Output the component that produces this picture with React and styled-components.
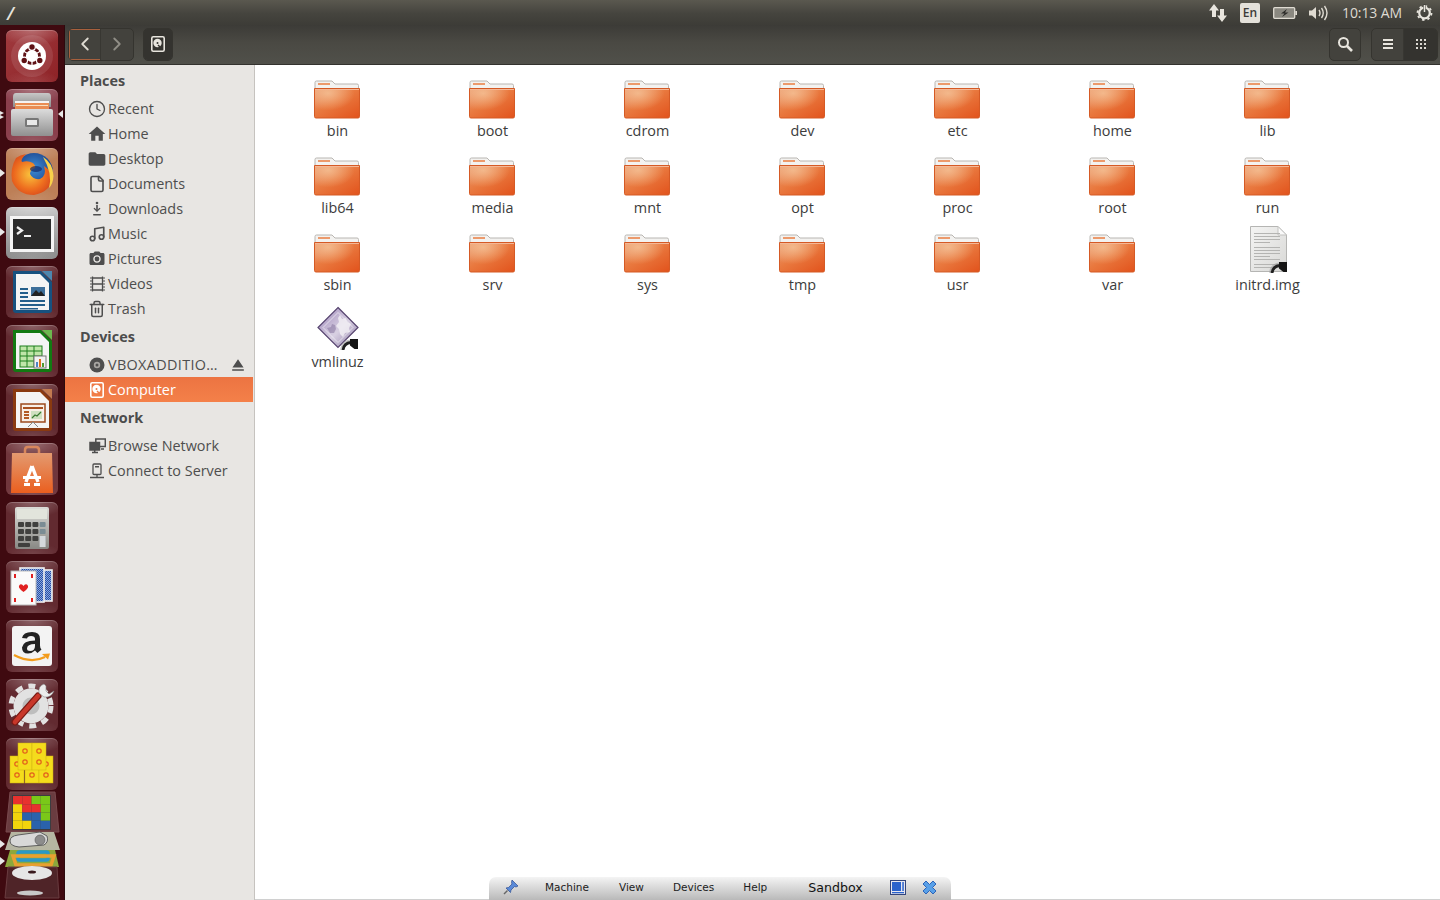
import React from "react";
import styled, { createGlobalStyle } from "styled-components";
import { LuFile, LuMusic, LuTrash2, LuChevronLeft, LuChevronRight } from "react-icons/lu";
import { MdHome, MdFolder, MdCameraAlt, MdEject } from "react-icons/md";
import { FiClock } from "react-icons/fi";

const GlobalStyle = createGlobalStyle`
  html, body { margin: 0; padding: 0; height: 100%; overflow: hidden; background: #fff; }
  * { box-sizing: border-box; }
  body { font-family: "Open Sans", "Noto Sans", sans-serif; }
`;

const Page = styled.div`
  position: relative;
  width: 1440px;
  height: 900px;
  display: flex;
  flex-direction: column;
  overflow: hidden;
`;

const TopBar = styled.header`
  height: 25px;
  flex: none;
  display: flex;
  align-items: center;
  justify-content: space-between;
  padding: 0 7px;
  background: linear-gradient(#5a584f 0%, #45443e 55%, #3d3c37 100%);
  color: #dfdbd2;
`;

const WindowName = styled.span`
  font-size: 18px;
  font-style: italic;
  font-weight: 600;
  color: #e6e3dc;
`;

const Indicators = styled.div`
  display: flex;
  align-items: center;
`;

const Indicator = styled.span`
  display: flex;
  align-items: center;
  margin-left: ${(p) => p.$gap || 0}px;
`;

const LangBadge = styled.span`
  width: 20px;
  height: 20px;
  border-radius: 2px;
  background: #e4e1da;
  color: #3c3b37;
  font-size: 12px;
  font-weight: 600;
  display: flex;
  align-items: center;
  justify-content: center;
`;

const Clock = styled.span`
  font-size: 14px;
  color: #dfdbd2;
  letter-spacing: -0.1px;
`;

const Body = styled.div`
  flex: 1;
  display: flex;
  min-height: 0;
`;

const Launcher = styled.nav`
  position: relative;
  width: 65px;
  flex: none;
  background: #3f0a10;
  border-right: 1px solid #2c0a0e;
  padding: 5px 0 0 6px;
  display: flex;
  flex-direction: column;
  gap: 7px;
  overflow: hidden;
`;

const Tile = styled.div`
  position: relative;
  width: 52px;
  height: 52px;
  flex: none;
  border-radius: 6px;
  background: ${(p) => p.$bg || "#6b2a30"};
  box-shadow: inset 0 1px 0 rgba(255, 255, 255, 0.22);
  &::before {
    content: "";
    position: absolute;
    inset: 0;
    border-radius: 6px;
    background: radial-gradient(ellipse 34px 16px at 50% 0, rgba(255, 255, 255, 0.28), transparent),
      radial-gradient(ellipse 30px 12px at 50% 100%, rgba(255, 255, 255, 0.12), transparent);
  }
  svg {
    position: relative;
    display: block;
  }
`;

const Pip = styled.i`
  position: absolute;
  width: 0;
  height: 0;
  top: ${(p) => p.$y}px;
  border-top: ${(p) => (p.$small ? 2 : 4)}px solid transparent;
  border-bottom: ${(p) => (p.$small ? 2 : 4)}px solid transparent;
  ${(p) =>
    p.$right
      ? "right: 1px; border-right: 5px solid #e8e8e8;"
      : `left: 0; border-left: ${p.$small ? 4 : 5}px solid #e8e8e8;`}
`;

const Stack = styled.div`
  margin: -6px 0 0 -2px;
  flex: none;
`;

const Window = styled.main`
  flex: 1;
  display: flex;
  flex-direction: column;
  min-width: 0;
`;

const Toolbar = styled.div`
  height: 40px;
  flex: none;
  display: flex;
  align-items: center;
  padding: 0 2px 1px 3px;
  background: linear-gradient(#3c3b37 0%, #4a4943 45%, #50504a 100%);
  border-bottom: 1px solid #33322e;
`;

const BtnGroup = styled.div`
  display: flex;
  height: 33px;
  margin-left: ${(p) => p.$gap || 0}px;
  border: 1px solid #35342f;
  border-radius: 5px;
  background: #43423d;
  overflow: hidden;
`;

const ToolBtn = styled.button`
  width: ${(p) => p.$w}px;
  height: 100%;
  padding: 0;
  border: none;
  display: flex;
  align-items: center;
  justify-content: center;
  color: ${(p) => (p.$dim ? "#908e86" : "#dfdbd2")};
  background: ${(p) => (p.$pressed ? "#34332f" : "transparent")};
  border-right: ${(p) => (p.$divider ? "1px solid #383732" : "none")};
  box-shadow: ${(p) => (p.$focus ? "inset 1px 1px 0 #a8603d, inset 0 -1px 0 #a8603d" : "none")};
`;

const Spacer = styled.div`
  flex: 1;
`;

const Main = styled.div`
  flex: 1;
  display: flex;
  min-height: 0;
`;

const Sidebar = styled.aside`
  width: 190px;
  flex: none;
  background: #e8e6e3;
  border-right: 1px solid #c6c3bf;
  color: #4e4e4e;
`;

const Heading = styled.h3`
  margin: 0;
  height: 31px;
  line-height: 31px;
  padding-left: 15px;
  font-size: 14.4px;
  font-weight: 700;
  color: #4c4c4c;
`;

const Row = styled.div`
  height: 25px;
  width: 188px;
  display: flex;
  align-items: center;
  gap: 3px;
  padding-left: 24px;
  font-size: 14.4px;
  color: ${(p) => (p.$active ? "#fff" : "#4e4e4e")};
  background: ${(p) => (p.$active ? "linear-gradient(#ec7442, #f48049)" : "transparent")};
`;

const RowIcon = styled.span`
  width: 16px;
  height: 16px;
  flex: none;
  display: flex;
  align-items: center;
  justify-content: center;
  svg { flex: none; }
`;

const RowText = styled.span`
  flex: 1;
  min-width: 0;
  white-space: nowrap;
  letter-spacing: ${(p) => (p.$wide ? "0.35px" : "0")};
`;

const Eject = styled.span`
  display: flex;
  margin-right: 5px;
  color: #4e4e4e;
`;

const Content = styled.section`
  flex: 1;
  background: #fff;
  padding-left: 5px;
  display: grid;
  grid-template-columns: repeat(7, 155px);
  grid-auto-rows: 77px;
  align-content: start;
`;

const Item = styled.div`
  display: flex;
  flex-direction: column;
  align-items: center;
`;

const ItemIcon = styled.div`
  height: 54px;
  display: flex;
  align-items: flex-end;
  justify-content: center;
  svg { display: block; }
`;

const ItemLabel = styled.div`
  height: 22px;
  line-height: 24px;
  font-size: 14.4px;
  color: #3c3c3c;
`;

const VBoxBar = styled.div`
  position: absolute;
  left: 489px;
  bottom: 0;
  width: 462px;
  height: 23px;
  padding-bottom: 3px;
  display: flex;
  align-items: center;
  border-radius: 7px 7px 0 0;
  background: linear-gradient(#f4f4f4, #b9b9b9);
  font-family: "DejaVu Sans", sans-serif;
  font-size: 10.5px;
  color: #1c1c1c;
`;

const BottomLine = styled.div`
  position: absolute;
  left: 255px;
  right: 0;
  bottom: 0;
  height: 1px;
  background: #d0d0d0;
`;

const VBoxItem = styled.span`
  margin-left: ${(p) => p.$gap}px;
  display: flex;
  align-items: center;
  white-space: nowrap;
`;

const VBoxTitle = styled.span`
  margin-left: 41px;
  font-family: "DejaVu Sans", sans-serif;
  font-size: 12.6px;
  color: #111;
`;

/* ---------- content icons ---------- */

const Folder = () => (
  <svg width="48" height="39" viewBox="1 0 48 39">
    <defs>
      <linearGradient id="folderBody" x1="0.05" y1="0" x2="0.95" y2="1">
        <stop offset="0" stopColor="#eb9b70" />
        <stop offset="0.45" stopColor="#e9793f" />
        <stop offset="1" stopColor="#e2541d" />
      </linearGradient>
      <radialGradient id="folderGlow" cx="0.3" cy="0.15" r="0.6">
        <stop offset="0" stopColor="#f6c79c" stopOpacity="0.75" />
        <stop offset="1" stopColor="#f6c79c" stopOpacity="0" />
      </radialGradient>
    </defs>
    <path d="M2 11V2.500Q2 1 3.500 1H19l3 3h22q1.500 0 1.500 1.500V11z" fill="#f3f2f0" stroke="#b9b6b2" />
    <rect x="5" y="3" width="12" height="2" fill="#ec9a6c" />
    <path d="M1.500 8.500H46.500V36.500Q46.500 38 45 38H3Q1.500 38 1.500 36.500z" fill="url(#folderBody)" stroke="#d55a25" />
    <path d="M2 9H46V37.500H2z" fill="url(#folderGlow)" />
    <path d="M2 9h44v1H2z" fill="#f4b795" />
  </svg>
);

const LinkArrow = ({ x, y }) => (
  <g transform={`translate(${x} ${y})`}>
    <path d="M-2 11Q-1 3 7 2.500" fill="none" stroke="#999" strokeWidth="4" opacity="0.55" />
    <path d="M-1 11Q0 4 7 3.500" fill="none" stroke="#1f1f1f" strokeWidth="2.800" />
    <path d="M6 0H14V10H10.500L6 6.500z" fill="#141414" />
  </g>
);

const TextFile = () => (
  <svg width="48" height="47" viewBox="0 0 48 47">
    <defs>
      <linearGradient id="pageFill" x1="0" y1="0" x2="1" y2="1">
        <stop offset="0" stopColor="#f4f4f3" />
        <stop offset="1" stopColor="#d8d8d6" />
      </linearGradient>
    </defs>
    <path d="M6.500 .5H34L42.500 9V45.500H6.500z" fill="url(#pageFill)" stroke="#b5b5b3" />
    <path d="M34 .5V9H42.500z" fill="#fafafa" stroke="#c2c2c0" />
    {[7, 10, 13, 16, 21, 24, 27, 30, 33, 38, 41].map((y, i) => (
      <rect key={y} x="10" y={y} width={i % 4 === 3 ? 16 : 26} height="1" fill="#b4b4b2" />
    ))}
    <LinkArrow x={29} y={36} />
  </svg>
);

const Kernel = () => (
  <svg width="48" height="44" viewBox="0 0 48 44">
    <defs>
      <linearGradient id="kernelFill" x1="0" y1="0" x2="1" y2="1">
        <stop offset="0" stopColor="#9b84b8" />
        <stop offset="0.55" stopColor="#d8d0e2" />
        <stop offset="1" stopColor="#8a78a4" />
      </linearGradient>
    </defs>
    <path d="M24 1.500L44 21.500 24 41.500 4 21.500z" fill="url(#kernelFill)" stroke="#56446f" strokeWidth="1.200" />
    <path d="M9 21.500L24 6.500 39 21.500 24 36.500z" fill="none" stroke="#fff" strokeWidth="0.800" opacity="0.7" />
    <path d="M26 9l2 4 4-1 1 4 4 2-2 4 1 4-5 1-2 4-3-3-1-5-3-3 3-4-1-4z" fill="#f2f0f5" opacity="0.8" />
    <path d="M13 22l4-1 1-3 3 1 1 4-2 4-4 0z" fill="#6e5b8a" opacity="0.4" />
    <LinkArrow x={30} y={33} />
  </svg>
);

/* ---------- sidebar icons ---------- */

const DownloadIcon = () => (
  <svg width="16" height="16" viewBox="0 0 16 16" fill="#4e4e4e">
    <circle cx="8" cy="2" r="1.300" />
    <rect x="7.200" y="4" width="1.600" height="6" />
    <path d="M4.500 7.500L8 11l3.500-3.500-1-.8L8 9.200 5.500 6.700z" />
    <rect x="4" y="13" width="8" height="1.500" rx=".7" />
  </svg>
);

const FilmIcon = () => (
  <svg width="17" height="16" viewBox="0 0 17 16" fill="none" stroke="#4e4e4e" strokeWidth="1.300">
    <path d="M3.500 .5V15.500M13.500 .5V15.500M3.500 2H13.500M3.500 8H13.500M3.500 14H13.500" />
    <path d="M1 2H3M1 5H3M1 8H3M1 11H3M1 14H3M14 2H16M14 5H16M14 8H16M14 11H16M14 14H16" strokeWidth="1.200" />
  </svg>
);

const DiscIcon = () => (
  <svg width="16" height="16" viewBox="0 0 16 16">
    <circle cx="8" cy="8" r="7.500" fill="#4e4e4e" />
    <circle cx="8" cy="8" r="3.200" fill="#a8a6a3" />
    <circle cx="8" cy="8" r="1.500" fill="#4e4e4e" />
  </svg>
);

const DriveIcon = ({ fg = "#fff", hub = "#ef7a47" }) => (
  <svg width="14" height="16" viewBox="0 0 14 16">
    <rect x=".8" y=".8" width="12.400" height="14.400" rx="1.500" fill="none" stroke={fg} strokeWidth="1.600" />
    <circle cx="6.500" cy="7" r="4.200" fill={fg} />
    <circle cx="6.500" cy="7" r="1" fill={hub} />
    <path d="M7 9l4 4" stroke={hub} strokeWidth="1.400" />
  </svg>
);

const NetworkIcon = () => (
  <svg width="17" height="16" viewBox="0 0 17 16" fill="none" stroke="#4e4e4e" strokeWidth="1.500">
    <rect x="6.800" y="1" width="9.500" height="7.500" />
    <rect x="1" y="4.500" width="9.500" height="7.500" fill="#4e4e4e" />
    <path d="M3 14.500h6M5.700 12v2.500" />
    <path d="M12 11h3" />
  </svg>
);

const ServerIcon = () => (
  <svg width="16" height="16" viewBox="0 0 16 16" fill="none" stroke="#4e4e4e" strokeWidth="1.300">
    <rect x="4" y="1" width="8" height="10.500" rx="1" />
    <rect x="6" y="3" width="4" height="1.500" fill="#4e4e4e" stroke="none" />
    <path d="M8 11.500V14M1 14.500h14" />
  </svg>
);

/* ---------- launcher icons ---------- */

const UbuntuLogo = () => (
  <svg width="52" height="52" viewBox="0 0 52 52">
    <circle cx="26" cy="26" r="21" fill="#fff" opacity="0.1" />
    <circle cx="26" cy="26" r="14" fill="#fff" />
    <circle cx="26" cy="26" r="7.500" fill="none" stroke="#5e1014" strokeWidth="2.800" />
    <g stroke="#fff" strokeWidth="1.300">
      <path d="M26 26V36M26 26L17.300 21M26 26L34.700 21" />
    </g>
    <circle cx="26" cy="17" r="3.300" fill="#5e1014" stroke="#fff" strokeWidth="1.200" />
    <circle cx="18.200" cy="30.500" r="3.300" fill="#5e1014" stroke="#fff" strokeWidth="1.200" />
    <circle cx="33.800" cy="30.500" r="3.300" fill="#5e1014" stroke="#fff" strokeWidth="1.200" />
  </svg>
);

const FilesIcon = () => (
  <svg width="52" height="52" viewBox="0 0 52 52">
    <defs>
      <linearGradient id="cab" x1="0" y1="0" x2="0" y2="1">
        <stop offset="0" stopColor="#dcdcdc" />
        <stop offset="1" stopColor="#909090" />
      </linearGradient>
      <linearGradient id="cabTop" x1="0" y1="0" x2="0" y2="1">
        <stop offset="0" stopColor="#c8c8c8" />
        <stop offset="1" stopColor="#8c8c8c" />
      </linearGradient>
    </defs>
    <path d="M7 8q0-4 3-4h32q3 0 3 4v10H7z" fill="url(#cabTop)" />
    <rect x="9" y="12" width="34" height="8" fill="#f4f4f4" />
    <rect x="9" y="14" width="34" height="6" fill="#e98d54" />
    <rect x="10" y="16" width="32" height="1" fill="#f9e0c0" />
    <rect x="5" y="20" width="42" height="27" rx="2" fill="url(#cab)" />
    <rect x="19" y="29" width="14" height="9" rx="1.500" fill="#777" />
    <rect x="21" y="31" width="10" height="5" fill="#e8e8e8" />
  </svg>
);

const FirefoxIcon = () => (
  <svg width="52" height="52" viewBox="0 0 52 52">
    <defs>
      <radialGradient id="ffOrange" cx="0.45" cy="0.5" r="0.6">
        <stop offset="0" stopColor="#f9c23c" />
        <stop offset="0.6" stopColor="#ee6e1f" />
        <stop offset="1" stopColor="#d5441b" />
      </radialGradient>
      <radialGradient id="ffBlue" cx="0.5" cy="0.4" r="0.6">
        <stop offset="0" stopColor="#3c8fd8" />
        <stop offset="1" stopColor="#19367e" />
      </radialGradient>
    </defs>
    <circle cx="28" cy="24" r="19" fill="url(#ffBlue)" />
    <path d="M10 10Q14 7 20 6 14 12 16 14 22 12 27 15 30 18 29 20 24 22 24 26 27 32 34 31 41 28 38 18 47 24 47 30 44 44 28 47 12 47 6 33 4 20 10 10z" fill="url(#ffOrange)" />
    <path d="M37 9Q47 15 47.500 28 47 36 43 40 47 26 37 9z" fill="#f8d14a" />
    <ellipse cx="30" cy="21" rx="6" ry="3" fill="#14296a" opacity="0.7" />
  </svg>
);

const TerminalIcon = () => (
  <svg width="52" height="52" viewBox="0 0 52 52">
    <rect x="4" y="9" width="44" height="36" fill="#f5f5f5" />
    <rect x="7" y="12" width="38" height="30" fill="#2c2c2c" />
    <path d="M11 20l5 3.500-5 3.500" fill="none" stroke="#f0f0f0" strokeWidth="2.200" />
    <rect x="18" y="28" width="7" height="2" fill="#f0f0f0" />
  </svg>
);

const OfficeDoc = ({ accent, corner, children }) => (
  <svg width="52" height="52" viewBox="0 0 52 52">
    <path d="M7 5H35L46 16V44Q46 47 43 47H10Q7 47 7 44z" fill={accent} />
    <path d="M10 8H34L43 17V44H10z" fill="#f4f4f4" />
    <path d="M36 5H46V15z" fill={corner} />
    {children}
  </svg>
);

const WriterIcon = () => (
  <OfficeDoc accent="#17517f" corner="#4d87ae">
    <rect x="25" y="21" width="14" height="9" fill="#3e6f9a" />
    <path d="M25 30l5-6 3 3 2-2 4 5z" fill="#222" />
    <g fill="#255f8b">
      <rect x="14" y="22" width="8" height="2" />
      <rect x="14" y="26" width="8" height="2" />
      <rect x="14" y="30" width="8" height="2" />
      <rect x="14" y="34" width="25" height="2" />
      <rect x="14" y="38" width="25" height="2" />
      <rect x="14" y="42" width="18" height="1.500" />
    </g>
  </OfficeDoc>
);

const CalcIcon = () => (
  <OfficeDoc accent="#127a12" corner="#6cb84e">
    <g fill="#bfe6a8" stroke="#1c7f1c">
      <rect x="14" y="21" width="22" height="21" />
      <path d="M14 26h22M14 31h22M14 36h22M21 21v21M28 21v21" fill="none" />
    </g>
    <rect x="28" y="31" width="12" height="12" fill="#f2f2f2" stroke="#777" />
    <rect x="30" y="37" width="2" height="5" fill="#4e84c4" />
    <rect x="33" y="34" width="2" height="8" fill="#e07020" />
    <rect x="36" y="38" width="2" height="4" fill="#4e9a30" />
  </OfficeDoc>
);

const ImpressIcon = () => (
  <OfficeDoc accent="#8a3a10" corner="#c27a50">
    <rect x="15" y="20" width="24" height="18" fill="#f8efe6" stroke="#9c4a1c" strokeWidth="1.500" />
    <rect x="17" y="23" width="20" height="2" fill="#a8501f" />
    <g fill="#b45a24">
      <rect x="18" y="27" width="5" height="2" />
      <rect x="18" y="30" width="5" height="2" />
      <rect x="18" y="33" width="5" height="2" />
    </g>
    <rect x="25" y="27" width="11" height="8" fill="#cfe0c0" />
    <path d="M26 34l3-3 2 1 4-4" fill="none" stroke="#3a7a30" strokeWidth="1.200" />
    <path d="M27 38l-5 5M27 38l5 5" stroke="#888" strokeWidth="1" />
  </OfficeDoc>
);

const StoreIcon = () => (
  <svg width="52" height="52" viewBox="0 0 52 52">
    <defs>
      <linearGradient id="bag" x1="0" y1="0" x2="0" y2="1">
        <stop offset="0" stopColor="#e39a70" />
        <stop offset="1" stopColor="#ea5f1f" />
      </linearGradient>
    </defs>
    <path d="M19 12V7q0-3 3-3h8q3 0 3 3v5" fill="none" stroke="#d8875c" strokeWidth="2.500" />
    <path d="M6 10H46L47 50H5z" fill="url(#bag)" />
    <path d="M26 23L20 39M26 23L32 39" fill="none" stroke="#fff" strokeWidth="3.400" />
    <rect x="17" y="33" width="18" height="3" fill="#fff" />
    <rect x="18" y="40" width="6" height="3" fill="#fff" />
    <rect x="28" y="40" width="6" height="3" fill="#fff" />
  </svg>
);

const CalculatorIcon = () => (
  <svg width="52" height="52" viewBox="0 0 52 52">
    <defs>
      <linearGradient id="calcBody" x1="0" y1="0" x2="0" y2="1">
        <stop offset="0" stopColor="#dcdcd8" />
        <stop offset="1" stopColor="#888884" />
      </linearGradient>
    </defs>
    <rect x="9" y="5" width="34" height="42" rx="2" fill="url(#calcBody)" />
    <rect x="11" y="7" width="30" height="10" fill="#e2e4dc" />
    {[0, 1, 2].map((r) =>
      [0, 1, 2, 3].map((c) => (
        <rect key={`${r}-${c}`} x={12 + c * 7.200} y={20 + r * 7} width="6" height="5" rx="1" fill={c === 3 ? "#7b8c94" : "#40403e"} />
      ))
    )}
    <rect x="12" y="41" width="12" height="4" rx="1" fill="#40403e" />
    <rect x="33.600" y="34" width="6" height="11" fill="#d4d8dc" />
  </svg>
);

const CardsIcon = () => (
  <svg width="52" height="52" viewBox="0 0 52 52">
    <defs>
      <pattern id="cardBack" width="2" height="2" patternUnits="userSpaceOnUse">
        <rect width="2" height="2" fill="#8fa8dc" />
        <rect width="1" height="1" fill="#2450a8" />
        <rect x="1" y="1" width="1" height="1" fill="#2450a8" />
      </pattern>
    </defs>
    <rect x="31" y="9" width="15" height="31" fill="url(#cardBack)" stroke="#f2f2f2" strokeWidth="1.600" />
    <rect x="14" y="7" width="24" height="34" fill="url(#cardBack)" stroke="#f2f2f2" strokeWidth="1.600" />
    <rect x="5" y="10" width="25" height="34" fill="#fafafa" stroke="#bbb" />
    <path d="M17.500 31q-7-5-3.500-7.500 2-1 3.500 1.500 1.500-2.500 3.500-1.500 3.500 2.500-3.500 7.500z" fill="#e02020" />
    <g fill="#e02020">
      <rect x="8" y="13" width="2" height="4" />
      <rect x="25" y="13" width="2" height="4" />
      <rect x="8" y="37" width="2" height="4" />
      <rect x="25" y="37" width="2" height="4" />
    </g>
  </svg>
);

const AmazonIcon = () => (
  <svg width="52" height="52" viewBox="0 0 52 52">
    <rect x="6" y="6" width="40" height="40" rx="3" fill="#f3f3f3" />
    <path d="M26 12q-9 0-10 6l5 .5q.5-2.500 4-2.500 4 0 4 3v1.500q-12 0-13 7 0 6 6 6 4 0 7-3l2.500 2.500 4-3.500q-1.500-1.500-1.500-4V19q0-7-8-7zM29 24v2q0 5-5 5-3 0-3-2.500 0-4.500 8-4.500z" fill="#222" />
    <path d="M8 35q17 9 31 2" fill="none" stroke="#f39c1c" strokeWidth="2.200" />
    <path d="M36 34l8-.5-2 6z" fill="#f39c1c" />
  </svg>
);

const SettingsIcon = () => (
  <svg width="52" height="52" viewBox="0 0 52 52">
    <circle cx="25" cy="27" r="12" fill="#bdbdbd" />
    <circle cx="25" cy="27" r="13" fill="none" stroke="#e2e2e2" strokeWidth="9" />
    <circle cx="25" cy="27" r="20" fill="none" stroke="#e2e2e2" strokeWidth="5" strokeDasharray="7 6" />
    <path d="M9 43L32 17" stroke="#7a1a14" strokeWidth="7" strokeLinecap="round" />
    <path d="M9 43L32 17" stroke="#c8372a" strokeWidth="4.500" strokeLinecap="round" />
    <path d="M38 5q-6 2-5 9l5 4q7 1 10-6l-5 3-3-3v-5z" fill="#ececec" stroke="#888" strokeWidth=".6" />
  </svg>
);

const MahjongIcon = () => {
  const tile = (x, y, k) => (
    <g key={k}>
      <rect x={x} y={y} width="14" height="27" fill="#f4dc1c" stroke="#cfae10" strokeWidth=".5" />
      <circle cx={x + 7} cy={y + 8} r="2.200" fill="none" stroke="#e2601c" strokeWidth="1.200" />
      <circle cx={x + 7} cy={y + 19} r="2.200" fill="none" stroke="#e2601c" strokeWidth="1.200" />
    </g>
  );
  return (
    <svg width="52" height="52" viewBox="0 0 52 52">
      {tile(4, 18, "a")}
      {tile(19, 18, "b")}
      {tile(33, 18, "c")}
      {tile(12, 5, "d")}
      {tile(26, 5, "e")}
    </svg>
  );
};

const blockColours = [
  "#e8312e", "#e8312e", "#7ac818", "#7ac818",
  "#f2d40c", "#e8312e", "#e8312e", "#7ac818",
  "#f2d40c", "#2a62ac", "#2a62ac", "#7ac818",
  "#f2d40c", "#f2d40c", "#2a62ac", "#2a62ac",
];

const FoldedStack = () => (
  <svg width="60" height="110" viewBox="0 0 60 110">
    <path d="M6 1H51L55 41H2z" fill="#6a3c40" stroke="#7a4a4e" />
    <rect x="8" y="4" width="39" height="35" fill="#3c3c40" />
    {blockColours.map((c, i) => (
      <rect key={i} x={9 + (i % 4) * 9.250} y={5 + Math.floor(i / 4) * 8.250} width="9.250" height="8.250" fill={c} />
    ))}
    <path d="M7 41H50L56 59H1z" fill="#b6b6a2" />
    <path d="M6 50q0-5 8-6l22-3 7 4q2 6-3 9l-25 2q-9-1-9-6z" fill="#d8d8d8" stroke="#5e5e5e" />
    <circle cx="36" cy="49" r="5" fill="#8c8c8c" stroke="#555" strokeWidth=".6" />
    <path d="M6 59H51L55 76H1z" fill="#8ca83c" />
    <rect x="14" y="61" width="30" height="8" rx="1.500" fill="none" stroke="#2a98c8" strokeWidth="3.500" />
    <path d="M9 65H50L47 74H12z" fill="none" stroke="#e8a030" strokeWidth="3.500" />
    <path d="M4 76H53L55 107H1z" fill="#4f2428" stroke="#6a3c40" />
    <ellipse cx="28" cy="82" rx="20" ry="7" fill="#e6e6e6" />
    <ellipse cx="28" cy="81" rx="4" ry="1.500" fill="#3a1a1e" />
    <ellipse cx="26" cy="102" rx="13" ry="2.500" fill="#c8c8c8" />
  </svg>
);

/* ---------- panel icons ---------- */

const TransferIcon = () => (
  <svg width="18" height="18" viewBox="0 0 18 18" fill="#e8e5de">
    <path d="M5 0L10 6.500H7V13H3V6.500H0z" />
    <path d="M13 18L18 11.500H15V5H11V11.500H8z" />
  </svg>
);

const BatteryIcon = () => (
  <svg width="24" height="14" viewBox="0 0 24 14">
    <rect x=".7" y="1.700" width="21" height="10.600" rx="1" fill="#8a8880" stroke="#dfdbd2" strokeWidth="1.300" />
    <rect x="22.300" y="5" width="1.700" height="4" fill="#dfdbd2" />
    <path d="M14 3L8 7.500h3.500L9 11l6.500-4.500H12z" fill="#2c2b28" />
  </svg>
);

const VolumeIcon = () => (
  <svg width="21" height="16" viewBox="0 0 21 16" fill="none" stroke="#dfdbd2" strokeWidth="1.400">
    <path d="M1 5.500H4L8 2V14L4 10.500H1z" fill="#dfdbd2" stroke="none" />
    <path d="M11 5q2 3 0 6M13.500 3q3.500 5 0 10M16.500 1q5 7 0 14" />
  </svg>
);

const GearIcon = () => (
  <svg width="17" height="17" viewBox="0 0 17 17" fill="none" stroke="#e8e5de">
    <circle cx="8.500" cy="9" r="5.300" strokeWidth="2.200" />
    <circle cx="8.500" cy="9" r="7" strokeWidth="1.800" strokeDasharray="2.400 3.100" />
    <path d="M8.500 0v8" strokeWidth="2.400" stroke="#45443e" />
    <path d="M8.500 1v7" strokeWidth="1.500" />
  </svg>
);

const SearchIcon = () => (
  <svg width="16" height="16" viewBox="0 0 16 16" fill="none" stroke="#e8e5de">
    <circle cx="6.500" cy="6.500" r="4.500" strokeWidth="2" />
    <path d="M10 10l5 5" strokeWidth="2.600" />
  </svg>
);

const ListIcon = () => (
  <svg width="10" height="10" viewBox="0 0 10 10" fill="#e8e5de">
    <rect y="0" width="10" height="2" />
    <rect y="4" width="10" height="2" />
    <rect y="8" width="10" height="2" />
  </svg>
);

const GridIcon = () => (
  <svg width="10" height="10" viewBox="0 0 10 10" fill="#dcd9d2">
    {[0, 4, 8].map((y) =>
      [0, 4, 8].map((x) => <rect key={`${x}${y}`} x={x} y={y} width="2" height="2" />)
    )}
  </svg>
);

const PinIcon = () => (
  <svg width="18" height="18" viewBox="0 0 18 18">
    <path d="M10 2l6 6-2 1-1.500-.5L9 12l-.5 2.500L4 10l2.500-.5L10 6l-.5-1.500z" fill="#5a8ad8" stroke="#2c4c90" strokeWidth=".7" />
    <path d="M5.500 12.500L2 16" stroke="#666" strokeWidth="1.400" />
  </svg>
);

const RestoreIcon = () => (
  <svg width="16" height="15" viewBox="0 0 16 15">
    <rect x=".5" y=".5" width="15" height="14" fill="#e8e8f0" stroke="#33457c" />
    <rect x="2" y="2" width="9" height="9" fill="#2a62cc" />
    <rect x="2" y="12" width="12" height="1.300" fill="#2a62cc" />
    <rect x="12.300" y="2" width="1.500" height="9" fill="#2a62cc" />
  </svg>
);

const CloseIcon = () => (
  <svg width="17" height="17" viewBox="0 0 17 17">
    <path d="M2 5L5 2l3.500 3.500L12 2l3 3-3.500 3.500L15 12l-3 3-3.500-3.500L5 15l-3-3 3.500-3.500z" fill="#58a0e8" stroke="#2c64b8" strokeLinejoin="round" />
  </svg>
);

const tiles = [
  { bg: "linear-gradient(135deg,#a03a3e,#8e2226)", icon: <UbuntuLogo /> },
  { bg: "#8a3f4c", icon: <FilesIcon /> },
  { bg: "#bd7f57", icon: <FirefoxIcon /> },
  { bg: "linear-gradient(#c4c4c4,#8a8a8a)", icon: <TerminalIcon /> },
  { bg: "#622a30", icon: <WriterIcon /> },
  { bg: "#622a30", icon: <CalcIcon /> },
  { bg: "#622a30", icon: <ImpressIcon /> },
  { bg: "#70363c", icon: <StoreIcon /> },
  { bg: "#622a30", icon: <CalculatorIcon /> },
  { bg: "#622a30", icon: <CardsIcon /> },
  { bg: "#622a30", icon: <AmazonIcon /> },
  { bg: "#622a30", icon: <SettingsIcon /> },
  { bg: "#622a30", icon: <MahjongIcon /> },
];

const pips = [
  { y: 86, small: true },
  { y: 90, small: true },
  { y: 85, right: true },
  { y: 144 },
  { y: 203 },
  { y: 815 },
  { y: 832 },
];

const places = [
  ["Recent", <FiClock size={18} strokeWidth={1.800} />],
  ["Home", <MdHome size={20} />],
  ["Desktop", <MdFolder size={20} />],
  ["Documents", <LuFile size={18} strokeWidth={2.200} />],
  ["Downloads", <DownloadIcon />],
  ["Music", <LuMusic size={18} strokeWidth={2.200} />],
  ["Pictures", <MdCameraAlt size={18} />],
  ["Videos", <FilmIcon />],
  ["Trash", <LuTrash2 size={18} strokeWidth={2} />],
];

const folders = [
  "bin", "boot", "cdrom", "dev", "etc", "home", "lib",
  "lib64", "media", "mnt", "opt", "proc", "root", "run",
  "sbin", "srv", "sys", "tmp", "usr", "var",
];

const App = () => (
  <Page>
    <GlobalStyle />
    <TopBar>
      <WindowName>/</WindowName>
      <Indicators>
        <Indicator><TransferIcon /></Indicator>
        <Indicator $gap={13}><LangBadge>En</LangBadge></Indicator>
        <Indicator $gap={13}><BatteryIcon /></Indicator>
        <Indicator $gap={11}><VolumeIcon /></Indicator>
        <Indicator $gap={13}><Clock>10:13 AM</Clock></Indicator>
        <Indicator $gap={14}><GearIcon /></Indicator>
      </Indicators>
    </TopBar>
    <Body>
      <Launcher>
        {tiles.map((t, i) => (
          <Tile key={i} $bg={t.bg}>{t.icon}</Tile>
        ))}
        <Stack><FoldedStack /></Stack>
        {pips.map((p, i) => (
          <Pip key={i} $y={p.y} $right={p.right} $small={p.small} />
        ))}
      </Launcher>
      <Window>
        <Toolbar>
          <BtnGroup>
            <ToolBtn $w={32} $divider $focus><LuChevronLeft size={22} /></ToolBtn>
            <ToolBtn $w={32} $dim><LuChevronRight size={22} /></ToolBtn>
          </BtnGroup>
          <BtnGroup $gap={9}>
            <ToolBtn $w={28} $pressed><DriveIcon fg="#e8e5de" hub="#34332f" /></ToolBtn>
          </BtnGroup>
          <Spacer />
          <BtnGroup>
            <ToolBtn $w={30}><SearchIcon /></ToolBtn>
          </BtnGroup>
          <BtnGroup $gap={10}>
            <ToolBtn $w={32} $divider><ListIcon /></ToolBtn>
            <ToolBtn $w={33} $pressed><GridIcon /></ToolBtn>
          </BtnGroup>
        </Toolbar>
        <Main>
          <Sidebar>
            <Heading>Places</Heading>
            {places.map(([name, icon]) => (
              <Row key={name}>
                <RowIcon>{icon}</RowIcon>
                <RowText>{name}</RowText>
              </Row>
            ))}
            <Heading>Devices</Heading>
            <Row>
              <RowIcon><DiscIcon /></RowIcon>
              <RowText $wide>VBOXADDITIO…</RowText>
              <Eject><MdEject size={20} /></Eject>
            </Row>
            <Row $active>
              <RowIcon><DriveIcon /></RowIcon>
              <RowText>Computer</RowText>
            </Row>
            <Heading>Network</Heading>
            <Row>
              <RowIcon><NetworkIcon /></RowIcon>
              <RowText>Browse Network</RowText>
            </Row>
            <Row>
              <RowIcon><ServerIcon /></RowIcon>
              <RowText>Connect to Server</RowText>
            </Row>
          </Sidebar>
          <Content>
            {folders.map((name) => (
              <Item key={name}>
                <ItemIcon><Folder /></ItemIcon>
                <ItemLabel>{name}</ItemLabel>
              </Item>
            ))}
            <Item>
              <ItemIcon><TextFile /></ItemIcon>
              <ItemLabel>initrd.img</ItemLabel>
            </Item>
            <Item>
              <ItemIcon><Kernel /></ItemIcon>
              <ItemLabel>vmlinuz</ItemLabel>
            </Item>
          </Content>
        </Main>
      </Window>
    </Body>
    <BottomLine />
    <VBoxBar>
      <VBoxItem $gap={13}><PinIcon /></VBoxItem>
      <VBoxItem $gap={25}>Machine</VBoxItem>
      <VBoxItem $gap={30}>View</VBoxItem>
      <VBoxItem $gap={29}>Devices</VBoxItem>
      <VBoxItem $gap={29}>Help</VBoxItem>
      <VBoxTitle>Sandbox</VBoxTitle>
      <VBoxItem $gap={27}><RestoreIcon /></VBoxItem>
      <VBoxItem $gap={15}><CloseIcon /></VBoxItem>
    </VBoxBar>
  </Page>
);

export default App;
